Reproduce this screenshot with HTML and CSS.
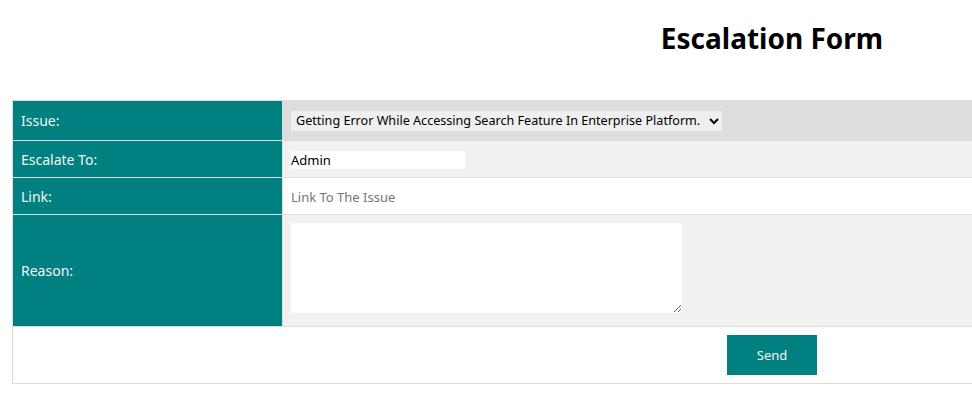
FILE: index.html
```html
<!DOCTYPE html>
<html lang="en">
<head>
  <meta charset="UTF-8" />
  <title>Escalation Form</title>
  <link rel="stylesheet" href="styles.css">
</head>
<body>
  <div class="page">
    <h1>Escalation Form</h1>

    <form class="escalation">
      <table class="form-table">
        <tr class="row-issue">
          <th>Issue:</th>
          <td>
            <select class="issue-select">
              <option>Getting Error While Accessing Search Feature In Enterprise Platform.</option>
            </select>
          </td>
        </tr>
        <tr class="row-escalate">
          <th>Escalate To:</th>
          <td><input class="text-input" type="text" value="Admin"></td>
        </tr>
        <tr class="row-link">
          <th>Link:</th>
          <td><input class="text-input link-input" type="text" placeholder="Link To The Issue"></td>
        </tr>
        <tr class="row-reason">
          <th>Reason:</th>
          <td><textarea class="reason-box"></textarea></td>
        </tr>
        <tr class="row-send">
          <td colspan="2" class="send-cell">
            <button type="button" class="send-button">Send</button>
          </td>
        </tr>
      </table>
    </form>
  </div>
</body>
</html>
```

FILE: styles.css
```css
body {
  margin: 0;
  font-family: "Noto Sans", sans-serif;
  background-color: #ffffff;
  color: #000;
}

.page {
  width: 1520px;
  padding: 0 12px;
}

h1 {
  margin: 0;
  padding: 18px 0 0;
  height: 100px;
  box-sizing: border-box;
  text-align: center;
  font-size: 28px;
  font-weight: 700;
  line-height: 40px;
}

.form-table {
  width: 100%;
  border-collapse: collapse;
  border: 1px solid #dddddd;
}

.form-table th,
.form-table td {
  border-bottom: 1px solid #dddddd;
  padding: 0 8px;
  font-size: 14px;
}

.form-table th {
  width: 253px;
  background-color: #008080;
  color: #f4f4f4;
  font-weight: normal;
  text-align: left;
  padding-left: 8px;
  border-right: 1px solid #dddddd;
}

.row-issue th,
.row-issue td {
  height: 39px;
}
.row-issue td {
  background-color: #dddddd;
}

.row-escalate th,
.row-escalate td {
  height: 36px;
}
.row-escalate td {
  background-color: #f1f1f1;
}

.row-link th,
.row-link td {
  height: 36px;
}

.row-reason th {
  height: 111px;
}
.row-reason td {
  height: 103px;
  background-color: #f1f1f1;
  vertical-align: top;
  padding-top: 8px;
}

.issue-select {
  font-family: inherit;
  font-size: 12.6px;
  width: 431px;
  height: 20px;
  border: none;
  background-color: #efefef;
  color: #000;
  padding: 0 1px;
}

.text-input {
  font-family: inherit;
  font-size: 13px;
  width: 174px;
  height: 18px;
  border: none;
  padding: 0;
  background: #fff;
  color: #000;
  outline: none;
}

.link-input {
  width: 300px;
}

.link-input::placeholder {
  color: #757575;
}

.reason-box {
  display: block;
  width: 391px;
  height: 90px;
  border: none;
  padding: 0;
  background: #fff;
  box-sizing: border-box;
}

.send-cell {
  height: 56px;
  text-align: center;
}

.send-button {
  width: 90px;
  height: 40px;
  border: none;
  background-color: #008080;
  color: #f4f4f4;
  font-family: inherit;
  font-size: 13px;
}
```
